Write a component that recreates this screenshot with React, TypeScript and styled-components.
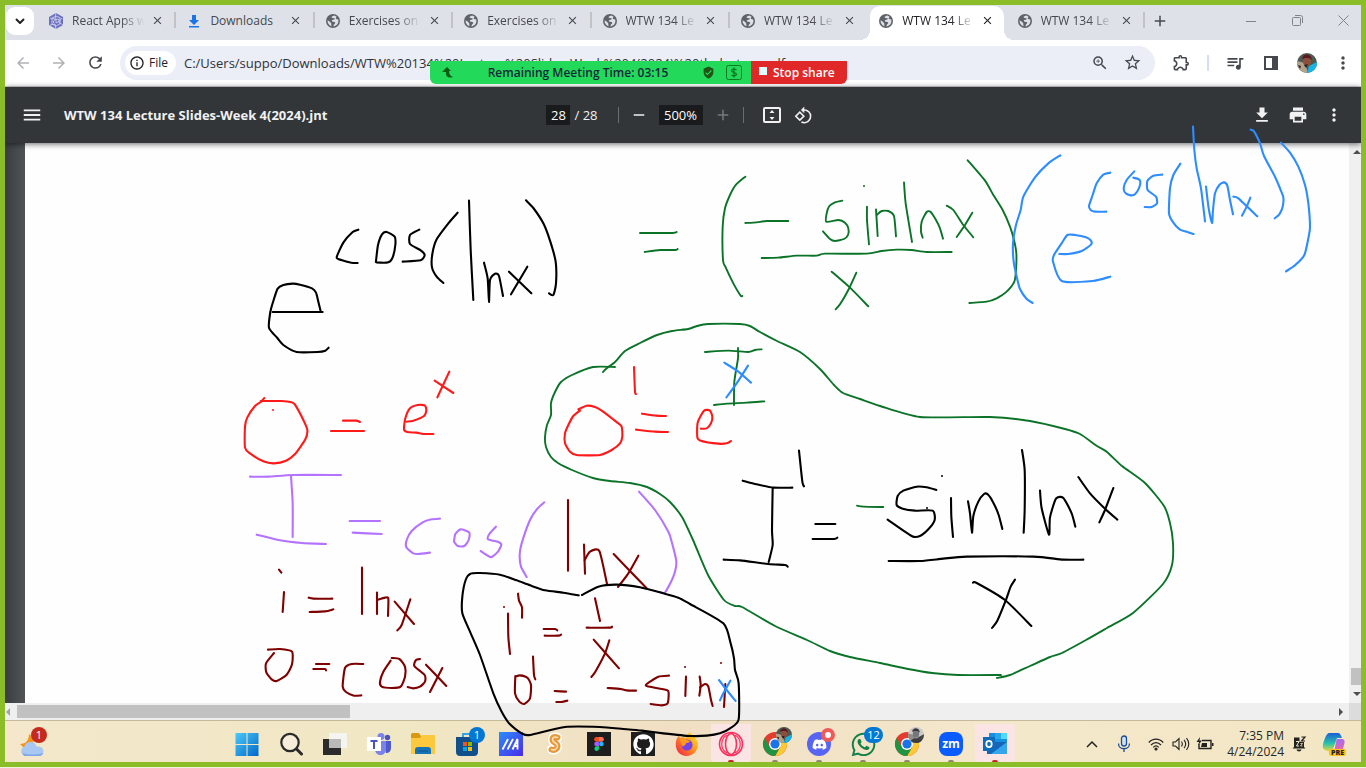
import React from 'react';
import styled, { createGlobalStyle, css } from 'styled-components';
import {
  MdArrowBack, MdArrowForward, MdRefresh, MdZoomIn, MdStarBorder, MdOutlineExtension, MdQueueMusic,
  MdMoreVert, MdMenu, MdRemove, MdAdd, MdFileDownload, MdPrint, MdRotate90DegreesCcw, MdClose,
  MdInfoOutline, MdVerifiedUser,
} from 'react-icons/md';
import { FaGithub, FaDiscord, FaWhatsapp } from 'react-icons/fa';

const Global = createGlobalStyle`
  * { box-sizing: border-box; }
  body { margin: 0; background: #eef5dc; overflow: hidden; }
  body, button, input { font-family: "Open Sans", "Noto Sans", sans-serif; font-size: 12px; }
  button { border: 0; padding: 0; background: none; color: inherit; cursor: pointer; }
  svg { display: block; flex: none; }
`;

const Screen = styled.div`
  position: relative;
  display: flex;
  flex-direction: column;
  height: calc(100vh - 1px);
  border: 5px solid #8bbd28;
  background: #fff;
  overflow: hidden;
`;

/* Tab strip */

const TabStrip = styled.header`
  display: flex;
  align-items: center;
  height: 35px;
  background: #dee1e8;
  color: #45484c;
`;

const TabSearch = styled.button`
  display: grid;
  place-items: center;
  flex: none;
  width: 28px;
  height: 28px;
  margin: 0 4px 4px 1px;
  border-radius: 9px;
  background: #fff;
  color: #202124;
`;

const Tabs = styled.nav`
  display: flex;
  flex: 0 1 1107px;
  min-width: 0;
  align-self: stretch;
`;

const Tab = styled.div<{ $active?: boolean; $bare?: boolean }>`
  position: relative;
  display: flex;
  align-items: center;
  flex: 1 1 0;
  min-width: 0;
  padding: 0 11px 4px 10px;
  &::after {
    content: "";
    position: absolute;
    right: 0;
    top: 7px;
    width: 2px;
    height: 16px;
    background: ${p => (p.$bare || p.$active ? 'transparent' : '#c3c3c6')};
  }
  ${p => p.$active && css`
    color: #202124;
    z-index: 1;
    &::before {
      content: "";
      position: absolute;
      inset: 1px 3px 0 2px;
      border-radius: 10px 10px 0 0;
      background: #fff;
    }
  `}
`;

const TabFlare = styled.i<{ $right?: boolean }>`
  position: absolute;
  bottom: 0;
  width: 10px;
  height: 10px;
  ${p => (p.$right
    ? 'right: -7px; background: radial-gradient(circle at 100% 0, transparent 10px, #fff 10px);'
    : 'left: -8px; background: radial-gradient(circle at 0 0, transparent 10px, #fff 10px);')}
`;

const TabLink = styled.a`
  position: relative;
  display: flex;
  align-items: center;
  gap: 8px;
  flex: 1;
  min-width: 0;
  color: inherit;
  text-decoration: none;
`;

const TabTitle = styled.span<{ $faded: boolean }>`
  flex: 1;
  white-space: nowrap;
  line-height: 16px;
  ${p => p.$faded && 'mask-image: linear-gradient(90deg, #000 66%, transparent 98%);'}
`;

const TabClose = styled.button`
  position: relative;
  display: grid;
  place-items: center;
  width: 16px;
  height: 16px;
  margin-left: 4px;
`;

const NewTab = styled.button`
  display: grid;
  place-items: center;
  flex: none;
  width: 30px;
  height: 30px;
  margin-bottom: 4px;
`;

const WindowButtons = styled.div`
  display: flex;
  flex: none;
  margin: 0 -5px 4px auto;
  color: #808388;
`;

const WindowButton = styled.button`
  display: grid;
  place-items: center;
  width: 46px;
  height: 28px;
`;

/* Address bar */

const AddressBar = styled.div`
  display: flex;
  align-items: center;
  height: 47px;
  padding: 0 0 1px 0;
  border-bottom: 1px solid #d4d4d6;
  color: #45484c;
`;

const ToolButton = styled.button<{ $dim?: boolean }>`
  display: grid;
  place-items: center;
  width: 36px;
  height: 34px;
  flex: none;
  color: ${p => (p.$dim ? '#b0b2b5' : '#45484c')};
`;

const SlimToolButton = styled(ToolButton)`
  width: 32px;
`;

const Omnibox = styled.div`
  display: flex;
  align-items: center;
  flex: 1;
  min-width: 0;
  height: 34px;
  margin: 0 8px 0 7px;
  padding: 0 7px 0 5px;
  border-radius: 17px;
  background: #ebeef7;
`;

const FileChip = styled.button`
  display: flex;
  align-items: center;
  gap: 4px;
  height: 24px;
  padding: 0 8px 0 4px;
  border-radius: 12px;
  background: #fff;
  color: #202124;
`;

const Url = styled.input`
  flex: 1;
  min-width: 0;
  margin-left: 8px;
  padding: 0;
  border: 0;
  background: none;
  color: #303236;
  font-size: 13px;
  line-height: 20px;
`;

const ToolDivider = styled.span`
  width: 2px;
  height: 16px;
  margin: 0 8px;
  background: #d0e0fb;
`;

/* PDF viewer */

const PdfBar = styled.div`
  position: relative;
  z-index: 1;
  display: grid;
  grid-template-columns: 1fr auto 1fr;
  align-items: center;
  height: 56px;
  padding: 0 9px;
  background: #323639;
  box-shadow: 0 1px 6px rgba(0, 0, 0, 0.6);
  color: #f1f1f1;
`;

const BarGroup = styled.div<{ $end?: boolean }>`
  display: flex;
  align-items: center;
  min-width: 0;
  justify-content: ${p => (p.$end ? 'flex-end' : 'flex-start')};
`;

const DocTitle = styled.h1`
  margin: 0 0 0 14px;
  font-size: 13px;
  font-weight: 700;
  line-height: 20px;
  white-space: nowrap;
`;

const BarField = styled.input<{ $wide?: boolean }>`
  width: ${p => (p.$wide ? 44 : 24)}px;
  height: 20px;
  padding: 0;
  border: 0;
  background: #191b1c;
  color: #fff;
  font-size: 13px;
  text-align: center;
`;

const PageCount = styled.span`
  margin: 0 20px 0 4px;
  font-size: 13px;
`;

const BarDivider = styled.span<{ $spaced?: boolean }>`
  width: 1px;
  height: 16px;
  margin-right: ${p => (p.$spaced ? 8 : 0)}px;
  background: #6b6e70;
`;

const BarButton = styled.button<{ $dim?: boolean }>`
  display: grid;
  place-items: center;
  width: 36px;
  height: 32px;
  color: ${p => (p.$dim ? '#77797b' : '#f1f1f1')};
`;

const WideBarButton = styled(BarButton)`
  width: 40px;
`;

const SlimBarButton = styled(BarButton)`
  width: 24px;
  margin-right: 4px;
`;

const Viewer = styled.main`
  display: grid;
  grid-template-columns: 20px 1fr 12px;
  grid-template-rows: 1fr 17px;
  flex: 1;
  min-height: 0;
`;

const Gutter = styled.div`
  background: linear-gradient(90deg, #3b3e41, #505457);
`;

const Page = styled.section`
  background: #fefefe;
`;

const VerticalTrack = styled.div`
  display: flex;
  flex-direction: column;
  align-items: flex-end;
  padding: 6px 0;
  background: #f0f0f0;
`;

const VerticalThumb = styled.div`
  width: 10px;
  height: 17px;
  margin: auto 0 6px;
  background: #c1c1c1;
`;

const HorizontalTrack = styled.div`
  grid-column: 1 / 3;
  display: flex;
  align-items: center;
  background: #efefef;
`;

const HorizontalThumb = styled.div`
  flex: 0 1 333px;
  height: 13px;
  margin: 0 auto 0 7px;
  background: #c1c1c1;
`;

const Corner = styled.div`
  background: #dcdcdc;
`;

/* Meeting share bar, which floats over the browser */

const ShareBar = styled.div`
  position: absolute;
  z-index: 3;
  top: 56px;
  left: 50%;
  display: flex;
  width: 417px;
  height: 23px;
  margin-left: -253px;
  border-radius: 0 0 6px 6px;
  overflow: hidden;
  font-weight: 600;
`;

const ShareStatus = styled.div`
  display: flex;
  align-items: center;
  flex: 1;
  padding: 0 9px 0 12px;
  gap: 11px;
  background: #23d959;
  color: #14283c;
`;

const ShareText = styled.span`
  flex: 1;
  text-align: center;
  white-space: nowrap;
`;

const StopShare = styled.button`
  display: flex;
  align-items: center;
  gap: 6px;
  width: 96px;
  padding-left: 8px;
  background: #e02828;
  color: #fff;
  font-weight: 600;
  white-space: nowrap;
`;

const StopSquare = styled.i`
  width: 8px;
  height: 8px;
  margin-bottom: 4px;
  background: #dff;
`;

/* Taskbar */

const Taskbar = styled.footer`
  display: flex;
  align-items: center;
  height: 42px;
  border-top: 1px solid #c4b998;
  background: linear-gradient(90deg, #f4e7cb, #f0e7c4 30%, #f1dfc4 50%, #f4e8cb 75%, #f3e6c4);
  color: #262626;
`;

const WeatherCell = styled.div`
  flex: 0 1 220px;
  min-width: 56px;
  padding-left: 14px;
`;

const AppCell = styled.button<{ $lit?: boolean }>`
  position: relative;
  display: grid;
  place-items: center;
  width: 40px;
  height: 41px;
  margin: 0 2px;
  padding-top: 5px;
  border-radius: 4px;
  background: ${p => (p.$lit ? 'linear-gradient(transparent 3px, #fbe4e4 3px)' : 'none')};
`;

const RunMark = styled.i<{ $hot?: boolean }>`
  position: absolute;
  bottom: 0;
  left: 17px;
  width: 6px;
  height: 2px;
  border-radius: 2px 2px 0 0;
  background: ${p => (p.$hot ? '#c42b1c' : '#8f8873')};
`;

const Badge = styled.span<{ $red?: boolean }>`
  position: absolute;
  top: ${p => (p.$red ? -6 : 6)}px;
  right: 2px;
  display: grid;
  place-items: center;
  min-width: 16px;
  height: 16px;
  padding: 0 2px;
  border-radius: 8px;
  background: ${p => (p.$red ? '#c42b1c' : '#0078d4')};
  color: #fff;
  font-size: 11px;
  line-height: 16px;
`;

const WideBadge = styled(Badge)`
  right: 0;
  min-width: 19px;
`;

const WeatherButton = styled.button`
  position: relative;
  display: block;
  width: 28px;
  height: 24px;
  margin-top: 6px;
  & > ${Badge} { right: 0; }
`;

const Tray = styled.div`
  display: flex;
  align-items: center;
  margin-left: auto;
  padding-top: 5px;
`;

const TrayButton = styled.button<{ $w: number }>`
  display: grid;
  place-items: center;
  width: ${p => p.$w}px;
  height: 32px;
`;

const Clock = styled.time`
  padding: 0 7px;
  text-align: right;
  line-height: 16px;
`;

const InkLayer = styled.svg`
  position: absolute;
  z-index: 4;
  top: -5px;
  left: -5px;
  pointer-events: none;
`;

/* Small drawings */

const Globe = () => (
  <svg width="16" height="16" viewBox="0 0 16 16">
    <circle cx="8" cy="8" r="7" fill="#5f6368" />
    <path d="M9.200 2.400 7 3.600c-.8.5-.4 1.300.5 1.400l1.800.2c.7.2.5 1-.1 1.200l-2.400.8.2 1.400 2.400.3c.8.1 1 .9.600 1.500l-1.200 1.400-.4 1.600c2.800-.3 5-2.500 5-5.400 0-.6-.1-1.100-.3-1.600L11.400 6c-.8-.2-.9-1-.3-1.600l.5-.7zM2.600 7.200l2.300 1.500 1.300 1.600.3 2.900C4.200 12.500 2.600 10.400 2.600 8z" fill="#dee1e8" />
  </svg>
);

const HexLogo = () => (
  <svg width="16" height="16" viewBox="0 0 16 16">
    <path d="M8 0l7 4v8l-7 4-7-4V4z" fill="#6c6fc0" />
    <path d="M8 3.200l4 1.500v6.300L8 13 4 11V5zM2 5l5 1.200L8 0M14 5l-3.500 4L15 12M8 16l-1-5-5 1M8 6v4l3-1.500V6.500L8 6l-2.500 2v2" fill="none" stroke="#d7d9f0" strokeWidth=".8" />
  </svg>
);

const DownloadMark = () => (
  <svg width="16" height="16" viewBox="0 0 16 16">
    <path d="M6 2h4v5h3l-5 5-5-5h3zM3 13h10v1.500H3z" fill="#1a73e8" />
  </svg>
);

const SidePanel = () => (
  <svg width="16" height="16" viewBox="0 0 16 16">
    <path d="M2 2h12v12H2z" fill="none" stroke="#45484c" strokeWidth="2" />
    <path d="M9 2h5v12H9z" fill="#45484c" />
  </svg>
);

const Avatar = ({ size = 20, grey = false }: { size?: number; grey?: boolean }) => (
  <svg width={size} height={size} viewBox="0 0 20 20">
    <clipPath id={grey ? 'face-grey' : 'face'}><circle cx="10" cy="10" r="10" /></clipPath>
    <g clipPath={`url(#${grey ? 'face-grey' : 'face'})`}>
      <path d="M0 0h20v20H0z" fill={grey ? '#c9c9c9' : '#4d5a50'} />
      <path d="M0 8l8 2 3 10H0z" fill={grey ? '#8c8c8c' : '#b3a38a'} />
      <path d="M10 20l2-7 8-4v11z" fill={grey ? '#444' : '#18b4e6'} />
      <ellipse cx="10" cy="8.500" rx="4" ry="5" fill={grey ? '#777' : '#8d4f3b'} />
      <path d="M5 6c1-6 9-6 10 1l-3-2-4 0z" fill={grey ? '#3a3a3a' : '#5c1720'} />
      {!grey && <path d="M7 12l4-1-2 4zM1 12l3 1-1 3z" fill="#222" />}
      {grey && <path d="M3 20c0-8 14-8 14 0z" fill="#3d3d3d" />}
    </g>
  </svg>
);

const FitPage = () => (
  <svg width="20" height="18" viewBox="0 0 20 18" fill="#f1f1f1">
    <rect x="2" y="2" width="16" height="14" rx="1" fill="none" stroke="#f1f1f1" strokeWidth="2" />
    <path d="M10 4l2.500 3h-5zM10 14l2.500-3h-5z" />
  </svg>
);

const Arrow = ({ d }: { d: string }) => (
  <svg width="8" height="6" viewBox="0 0 8 6" fill="#4f4f4f"><path d={d} /></svg>
);

const Pointer = ({ d, fill }: { d: string; fill: string }) => (
  <svg width="5" height="8" viewBox="0 0 5 8" fill={fill}><path d={d} /></svg>
);

const Weather = () => (
  <svg width="26" height="24" viewBox="0 0 26 24">
    <path d="M1 11c6 0 9-4 9-10 5 3 6 9 2 13H4z" fill="#f4941e" />
    <path d="M6 23a5 5 0 0 1-.5-9.500C6 10 9 8.500 12 9c3 0 5 2 5.500 4.500 4-.5 7 1.500 7 5 0 3-2 4.500-4.500 4.500z" fill="#a9c7f3" />
    <path d="M4 20c4 2 14 2 20 0-.5 2-2 3-4 3H6c-1 0-2-1-2-3z" fill="#7fa6e6" />
  </svg>
);

const Windows = () => (
  <svg width="24" height="24" viewBox="0 0 24 24">
    <linearGradient id="win" x2="1" y2="1"><stop stopColor="#4cc9f8" /><stop offset="1" stopColor="#0068c9" /></linearGradient>
    <path d="M.5 1H11.500v11H.5zM12.500 1H23.500v11H12.500zM.5 13H11.500v11H.5zM12.500 13H23.500v11H12.500z" fill="url(#win)" />
  </svg>
);

const SearchMark = () => (
  <svg width="24" height="24" viewBox="0 0 24 24" fill="none" stroke="#2a2a2a">
    <circle cx="11" cy="10.500" r="8.700" strokeWidth="2.200" fill="#f6eedb" />
    <path d="M17.500 17l5 5" strokeWidth="3" strokeLinecap="round" />
  </svg>
);

const TaskView = () => (
  <svg width="24" height="24" viewBox="0 0 24 24">
    <path d="M0 7h18v16H0z" fill="#2b2b2b" />
    <path d="M6 1h18v15H6z" fill="#f4f4f4" opacity=".93" />
    <path d="M6 7h12v9H6z" fill="#b9b9b9" />
  </svg>
);

const Teams = () => (
  <svg width="26" height="24" viewBox="0 0 26 24">
    <circle cx="21.500" cy="5.500" r="2.700" fill="#4b53bc" />
    <circle cx="15" cy="4.500" r="3.500" fill="#7b83eb" />
    <path d="M17 9h8v7c0 3-2 5-5 5z" fill="#5059c9" />
    <path d="M9 9h11v8c0 8-11 8-11 0z" fill="#7b83eb" />
    <path d="M1 5h14v14H1z" fill="#fff" />
    <path d="M4.500 8h7v2H9v7H7v-7H4.500z" fill="#4b53bc" />
  </svg>
);

const Explorer = () => (
  <svg width="24" height="24" viewBox="0 0 24 24">
    <path d="M0 3c0-1 .5-2 1.500-2H8l2 3h12l2 3v4H0z" fill="#d99a12" />
    <path d="M0 6h9l2-3h13v19H0z" fill="#fcc83d" />
    <path d="M4 22v-4c0-2 1-3 3-3h10c2 0 3 1 3 3v4z" fill="#1573b8" />
    <path d="M7 19h10" stroke="#0d5587" />
  </svg>
);

const Store = () => (
  <svg width="24" height="24" viewBox="0 0 24 24">
    <path d="M8 6V2h9v4" fill="none" stroke="#35a3e8" strokeWidth="2" />
    <path d="M1 5h22v15c0 2-1 4-4 4H5c-3 0-4-2-4-4z" fill="#12508c" />
    <path d="M8 10h4v4H8z" fill="#f35325" /><path d="M13 10h4v4h-4z" fill="#81bc06" />
    <path d="M8 15h4v4H8z" fill="#05a6f0" /><path d="M13 15h4v4h-4z" fill="#ffba08" />
  </svg>
);

const MyAsus = () => (
  <svg width="24" height="24" viewBox="0 0 24 24">
    <linearGradient id="asus" x2="1" y2="1"><stop stopColor="#2a8cff" /><stop offset="1" stopColor="#4b2be8" /></linearGradient>
    <path d="M0 0h24v24H0z" fill="url(#asus)" />
    <path d="M3.500 17.500L9 7M8.500 17.500L14 7M13.500 17.500L18.500 7v10.500M16 14h3" fill="none" stroke="#fff" strokeWidth="1.800" />
  </svg>
);

const Scribe = () => (
  <svg width="24" height="26" viewBox="0 0 24 26" fill="none" strokeLinecap="round" strokeLinejoin="round">
    <path d="M14.500 6.500c-2.500-1-5-.5-5 2 0 3.500 5 3 5 6.500s-3.500 4.500-6 3.500" stroke="#fff" strokeWidth="9" />
    <path d="M14.500 6.500c-2.500-1-5-.5-5 2 0 3.500 5 3 5 6.500s-3.500 4.500-6 3.500" stroke="#e79a3c" strokeWidth="6" />
    <path d="M14.500 6.500c-2.500-1-5-.5-5 2 0 3.500 5 3 5 6.500s-3.500 4.500-6 3.500" stroke="#fbe2b8" strokeWidth="1.500" />
  </svg>
);

const Figma = () => (
  <svg width="24" height="24" viewBox="0 0 24 24">
    <path d="M0 0h24v24H0z" fill="#1e1e1e" />
    <path d="M12 5H9.500a2.300 2.300 0 0 0 0 4.700H12z" fill="#f24e1e" />
    <path d="M12 5h2.500a2.300 2.300 0 0 1 0 4.700H12z" fill="#ff7262" />
    <path d="M12 9.700H9.500a2.300 2.300 0 0 0 0 4.600H12z" fill="#a259ff" />
    <circle cx="14.400" cy="12" r="2.300" fill="#1abcfe" />
    <path d="M12 14.300H9.500A2.300 2.300 0 1 0 12 16.600z" fill="#0acf83" />
  </svg>
);

const GithubTile = styled.span`
  display: grid;
  place-items: center;
  width: 24px;
  height: 24px;
  background: #1e1e1e;
  color: #fff;
`;

const Firefox = () => (
  <svg width="24" height="24" viewBox="0 0 24 24">
    <linearGradient id="fox" x1="1" x2="0" y2="1"><stop offset=".1" stopColor="#ffe226" /><stop offset=".5" stopColor="#ff8a1f" /><stop offset="1" stopColor="#f0164f" /></linearGradient>
    <path d="M15 0c1 3 7 5 8 12 0 7-5 12-11.500 12S.8 19 .8 12.500C.8 9 2 5 4 4l1 2c2-1 5-1 6 1 0-3 2-5 4-7z" fill="url(#fox)" />
    <circle cx="12" cy="13" r="5.500" fill="#7542e5" />
    <path d="M5 7c3-1 5 0 7 1l3 1c-1 2-3 2-4 2 0 3-3 2-3 4C6 12 5 9 5 7z" fill="#ff9a20" />
  </svg>
);

const Opera = () => (
  <svg width="26" height="26" viewBox="0 0 26 26" fill="none" stroke="#fa2f5c" strokeWidth="1.600">
    <circle cx="13" cy="13" r="11.500" />
    <ellipse cx="13" cy="13" rx="5.500" ry="10.500" />
    <path d="M9 4c-7 4-7 14 0 18M17 4c7 4 7 14 0 18" strokeWidth="1.200" />
  </svg>
);

const Chrome = ({ grey }: { grey?: boolean }) => (
  <svg width="24" height="24" viewBox="0 0 24 24" overflow="visible">
    <circle cx="12" cy="12" r="12" fill="#e33b2e" />
    <path d="M12 6h10.400A12 12 0 0 1 12 24l5.200-9z" fill="#fcc934" />
    <path d="M12 24A12 12 0 0 1 1.600 6l5.200 9 10.400 0z" fill="#229342" />
    <circle cx="12" cy="12" r="6" fill="#fff" />
    <circle cx="12" cy="12" r="4.600" fill="#1a73e8" />
    <g transform="translate(13 -5)"><Avatar size={16} grey={grey} /></g>
  </svg>
);

const DiscordTile = styled.span`
  display: grid;
  place-items: center;
  width: 24px;
  height: 24px;
  border-radius: 12px;
  background: #5865f2;
  color: #fff;
`;

const LiveDot = styled.i`
  position: absolute;
  top: 7px;
  right: 4px;
  width: 14px;
  height: 14px;
  border: 4px solid #ee5b5b;
  border-radius: 7px;
  background: #fff;
`;

const ZoomTile = styled.span`
  display: grid;
  place-items: center;
  width: 24px;
  height: 24px;
  border-radius: 8px;
  background: #0b5cff;
  color: #fff;
  font-size: 12px;
  font-weight: 700;
  line-height: 20px;
`;

const Outlook = () => (
  <svg width="24" height="22" viewBox="0 0 24 22">
    <path d="M6 0h18v9H6z" fill="#1490df" /><path d="M12 0h6v6h-6z" fill="#28a8ea" /><path d="M18 0h6v6h-6z" fill="#50d9ff" />
    <path d="M4 9h20v12H4z" fill="#1565b8" /><path d="M24 9v12H8z" fill="#35a6ee" />
    <path d="M0 4h12v14H0z" fill="#0f6cbd" />
    <ellipse cx="6" cy="11" rx="2.700" ry="3.200" fill="none" stroke="#fff" strokeWidth="1.800" />
  </svg>
);

const Mic = () => (
  <svg width="14" height="18" viewBox="0 0 14 18" fill="none" stroke="#1a4d94" strokeWidth="1.300">
    <rect x="4.500" y="1" width="5" height="10" rx="2.500" fill="#cfe0f2" />
    <path d="M1.500 8.500c0 7 11 7 11 0M7 14v3" />
  </svg>
);

const Wifi = () => (
  <svg width="16" height="14" viewBox="0 0 16 14" fill="none" stroke="#222" strokeWidth="1.200">
    <path d="M.8 5.500c4-4.600 10.400-4.600 14.400 0M3 8c3-3.200 7-3.200 10 0M5.200 10.300c1.800-1.800 3.800-1.800 5.600 0" />
    <circle cx="8" cy="12" r="1" fill="#222" />
  </svg>
);

const Volume = () => (
  <svg width="18" height="14" viewBox="0 0 18 14" fill="none" stroke="#222" strokeWidth="1.100">
    <path d="M1 5v4h2.500L7 12.500v-11L3.500 5zM9.500 4.500c1 1.500 1 3.500 0 5M12 2.800c2 2.500 2 6 0 8.400M14.500 1.200c2.800 3.500 2.800 8 0 11.600" />
  </svg>
);

const Battery = () => (
  <svg width="18" height="14" viewBox="0 0 18 14">
    <path d="M6 3.500h9v8H3V7" fill="none" stroke="#222" strokeWidth="1.400" />
    <path d="M16 6h1.500v3H16zM6 6h5v4H5z" fill="#222" />
    <path d="M4 0L.5 5H3L2 8.500 6 3.500H3.500z" fill="#222" />
  </svg>
);

const Bell = () => (
  <svg width="15" height="16" viewBox="0 0 15 16">
    <path d="M2 1.500h5.500V6H12v5l1.500 1.500H.5L2 11z" fill="#222" /><path d="M4.500 13.500h5c-.5 2.500-4.500 2.500-5 0z" fill="#222" />
    <path d="M4 5.500h3L4.500 10H7" fill="none" stroke="#f3e6c4" />
    <path d="M8.500 7.500h2L8.500 10h2" fill="none" stroke="#f3e6c4" strokeWidth=".8" />
    <path d="M9.500 1H13L9.500 5H13" fill="none" stroke="#222" strokeWidth="1.200" />
  </svg>
);

const Copilot = styled.span`
  position: relative;
  display: block;
  width: 24px;
  height: 24px;
`;

const Pre = styled.span`
  position: absolute;
  right: 0;
  bottom: 0;
  width: 17px;
  border-radius: 2px;
  background: #ffc21a;
  color: #222;
  font-size: 7px;
  font-weight: 800;
  line-height: 7px;
  text-align: center;
`;

/* Handwritten ink. Each sheet holds strokes in fractions of a pixel from its own origin. */

type Stroke = [color: string, points: string[]];
type Sheet = { x: number; y: number; unit: number; strokes: Stroke[] };

const BLACK = '#000';
const GREEN = '#0b7328';
const BLUE = '#2d8cff';
const RED = '#ff1a1a';
const PURPLE = '#b473ff';
const MAROON = '#7f0000';

const sheets: Sheet[] = [
  { x: 230, y: 180, unit: 3, strokes: [
    [BLACK, [
      '128,396 278,396',
      '272,394 265,365 258,338 246,325 210,314 188,311 160,315 143,326 130,363 121,396 117,443 142,474 160,495 200,516 262,516 286,512 296,503',
      '385,149 368,156 340,188 320,232 334,240 364,248 383,249',
      '438,243 444,195 456,163 470,156 494,170 496,195 488,232 475,247 440,247 438,243',
      '568,149 540,165 540,192 572,211 584,225 572,241 518,245',
      '683,98 655,130 620,178 607,222 606,262 620,290 640,309',
      '717,62 722,210 730,360',
      '762,248 773,295 777,366 780,300 795,281 807,288 819,348',
      '837,275 904,340', '892,260 843,343',
      '888,61 910,84 940,130 960,182 977,245 978,310 970,345 957,340',
    ]],
    [RED, [
      '103,654 92,666 75,678 52,712 45,740 45,803 60,820 100,844 132,850 168,842 195,822 226,778 232,750 220,720 195,674 185,667 155,663 92,663',
      '339,722 378,722 390,726', '303,753 402,753',
      '530,725 550,722 582,708 589,690 584,676 563,675 540,685 526,715 522,748 532,756 560,758 580,762 610,762',
      '614,602 670,639', '658,575 622,652',
    ]],
  ] },
  { x: 230, y: 460, unit: 3, strokes: [
    [PURPLE, [
      '60,50 115,50 190,45 333,45', '183,48 188,130 188,231', '80,224 150,241 215,249 288,252',
      '359,183 450,183', '368,218 455,222',
      '630,176 605,178 578,187 545,213 530,240 529,262 550,280 565,282 600,278',
      '672,245 676,222 692,208 718,218 716,240 703,258 683,258 672,245',
      '798,200 778,222 774,238 805,246 814,254 804,275 785,291 775,288 752,273',
    ]],
    [MAROON, [
      '147,329 154,338', '162,396 158,456', '236,413 250,416 307,416', '239,456 285,454 310,448',
      '396,323 396,462', '441,398 441,462', '442,420 465,413 475,416 474,468',
      '494,425 552,492', '541,418 515,495 502,511',
      '114,569 150,567 186,575 186,613 170,644 140,663 125,658 109,637 108,610 132,579',
      '258,612 298,612', '250,627 285,627 288,631',
      '400,612 365,612 345,624 338,680 348,696 372,707 394,706',
      '485,594 508,597 525,620 525,650 512,680 485,684 455,680 450,665 460,635 482,602',
      '570,597 558,600 553,618 584,645 585,665 570,680 550,685 533,681',
      '588,614 649,678', '637,624 600,696',
    ]],
  ] },
  { x: 450, y: 480, unit: 3, strokes: [
    [PURPLE, [
      '283,67 262,86 240,120 215,190 209,225 213,260 230,291',
      '567,35 615,90 655,155 665,185 679,245 670,290 645,338 632,336',
    ]],
    [MAROON, [
      '354,60 354,272', '402,194 405,281', '404,240 420,215 448,213 471,312',
      '491,222 590,325', '565,227 535,280 504,321',
      '174,401 175,470 180,522', '204,341 207,362 216,382 216,413',
      '281,447 315,447 322,451', '284,467 325,467 333,464', '435,355 450,423', '410,443 480,443 486,440',
      '431,479 507,565', '478,481 465,520 436,575 424,591',
      '196,588 195,640 208,665 223,672 240,655 243,615 232,593 210,586 196,590', '249,530 252,585 256,598',
      '314,633 348,635', '319,666 335,666 352,662', '473,624 512,627 530,631 558,632',
      '657,587 625,590 590,612 592,619 650,630 656,640 653,670 635,676 602,672',
      '708,590 706,648', '749,590 752,615 748,647',
      '750,622 765,612 775,620 783,660 788,678', '826,612 822,681',
    ]],
    [BLUE, ['807,600 830,630 857,663', '841,602 820,640 810,661']],
    [BLACK, [
      '396,345 445,320 500,314 570,322 640,340 685,353 720,372 820,430 842,490 852,535 855,570 866,610 866,718 840,745 810,760 770,767 720,768 640,760 575,752 520,747 450,741 345,741 240,765 215,760 180,733 155,695 130,640 90,525 60,455 37,400 37,350 47,300 62,281 90,279 150,284 200,301 240,316 285,331 340,338 386,346',
    ]],
  ] },
  { x: 530, y: 320, unit: 3, strokes: [
    [RED, [
      '312,141 315,215 318,222',
      '150,272 130,288 115,315 105,340 105,370 120,395 140,405 210,405 245,390 270,370 277,350 275,320 262,308 215,272 195,261 170,257 145,268',
      '336,281 378,287 408,288', '318,329 375,335 414,336',
      '513,326 530,325 543,310 547,290 540,272 522,272 503,308 502,352 512,362 565,371 590,370 603,363',
    ]],
    [GREEN, ['525,96 595,92 655,96 675,90 695,88', '624,84 624,115 613,185 612,255', '552,255 590,251 650,248 703,244']],
    [BLUE, ['583,128 625,155 663,188', '654,137 620,190 589,232']],
  ] },
  { x: 620, y: 120, unit: 3, strokes: [
    [GREEN, [
      '60,339 158,339 170,336', '74,396 120,390 165,390 173,387',
      '376,170 348,194 330,225 315,265 308,320 309,420 316,440 340,490 362,527 367,528',
      '376,309 410,307 440,303 505,303',
      '667,242 645,247 628,258 620,280 619,305 655,300 675,308 685,325 684,345 672,357 645,363 630,357 609,334',
      '741,260 741,300 747,373', '768,268 773,348', '770,285 785,273 805,273 822,288 828,349',
      '852,187 857,250 876,366', '908,353 903,335 905,305 920,276 932,276 948,300 960,325 969,356',
      '980,257 1000,270 1030,315 1060,352', '1057,278 1035,315 1010,351',
      '425,414 475,413 530,407 590,407 615,401 740,401 785,393 830,389 875,390 920,396 995,396',
      '635,455 690,503 745,559', '709,458 685,510 660,553 647,568',
      '1043,121 1095,182 1120,225 1148,270 1170,320 1182,360 1189,400 1188,450 1183,485 1160,515 1130,535 1100,545 1048,549',
    ]],
  ] },
  { x: 980, y: 120, unit: 3, strokes: [
    [BLUE, [
      '241,106 205,130 165,172 130,230 122,270 108,315 99,370 101,425 110,470 120,507 140,537 158,549',
      '238,402 265,402 305,393 333,374 333,362 318,352 285,345 262,345 245,370 222,405 219,425 245,483 338,483 391,470',
      '391,158 370,164 350,190 338,225 327,258 332,270 345,275 379,275',
      '463,154 440,180 431,205 437,220 452,226 465,223 478,202 481,185 475,177 460,173',
      '547,164 520,167 502,183 503,210 528,230 531,250 515,261 494,261',
      '601,131 580,165 570,205 567,280 580,308 600,329 620,335 641,342',
      '639,20 643,90 650,145 663,205 675,304',
      '678,200 686,265 696,309 699,270 705,220 718,195 732,187 742,197 750,240 759,283',
      '760,230 775,235 832,289', '811,233 800,260 786,287',
      '812,29 822,34 840,70 852,108 885,170 900,205 910,232 908,260 898,283 884,295',
      '903,68 930,98 955,140 975,195 985,250 990,320 985,355 973,405 945,436 918,454',
    ]],
  ] },
  { x: 710, y: 430, unit: 3, strokes: [
    [BLACK, [
      '98,152 140,163 190,173 247,173', '267,62 277,155 282,169', '188,174 186,300 188,345 176,396',
      '41,389 90,391 175,402 225,405 233,410', '316,282 376,282', '308,327 372,327 382,323',
      '679,180 650,172 620,170 580,182 563,198 560,225 578,236 615,242 668,242 674,270 655,298 628,319 605,318 533,269',
      '723,204 724,260 729,321',
      '774,214 780,250 786,308 790,258 805,215 822,192 833,193 850,218 866,255 877,297',
      '936,60 944,120 944,240 941,308',
      '990,182 995,235 1017,314 1020,262 1038,206 1060,204 1085,250 1096,290',
      '1105,141 1140,190 1185,236 1222,269', '1210,174 1185,240 1168,277',
      '536,393 630,393 700,386 770,380 970,380 1060,389 1120,389',
      '789,458 800,459 885,510 964,588', '915,449 902,470 887,512 862,572 846,594',
    ]],
    [GREEN, ['441,227 460,230 520,231']],
  ] },
  { x: 0, y: 0, unit: 1, strokes: [
    [GREEN, [
      '615,367 593,367 572,375 561,382 555,392 551,403 551,415 547,425 545,437 546,447 551,457 558,463 572,470 593,478 610,481 630,483 647,487 660,494 670,502 682,517 693,540 708,575 724,600 735,606 742,607 775,626 807,640 830,651 850,657 880,663 908,669 932,673 958,675 1001,675',
      '997,678 1010,675 1030,666 1050,657 1062,653 1086,640 1107,628 1133,613 1163,584 1172,565 1173,543 1170,523 1164,506 1145,483 1122,466 1107,452 1097,446 1080,434 1065,429 1030,421 990,417 920,417 880,406 860,399 843,393 834,385 820,369 800,352 777,341 760,332 750,326 740,324 708,324 697,326 688,329 672,331 657,335 640,343 625,351 615,362 607,368 603,372',
    ]],
  ] },
];

/* Single taps of the pen */
const dots: [number, number, string][] = [
  [273, 410, RED], [504, 607, MAROON], [685, 667, MAROON], [721, 663, MAROON],
  [864, 186, GREEN], [942, 476, BLACK], [927, 508, BLACK],
];

/* Joins the sampled pen positions with a soft curve through every one of them. */
function strokePath(points: string) {
  const p = points.split(' ').map(s => s.split(',').map(Number));
  let d = `M${p[0]}`;
  for (let i = 0; i < p.length - 1; i++) {
    const a = p[i - 1] ?? p[i];
    const b = p[i];
    const c = p[i + 1];
    const e = p[i + 2] ?? c;
    const k = 1 / 9;
    d += `C${b[0] + (c[0] - a[0]) * k},${b[1] + (c[1] - a[1]) * k} ${c[0] - (e[0] - b[0]) * k},${c[1] - (e[1] - b[1]) * k} ${c}`;
  }
  return d;
}

const Ink = () => (
  <InkLayer width="1366" height="768" viewBox="0 0 1366 768" fill="none" strokeLinecap="round" strokeLinejoin="round">
    {sheets.map((s, i) => (
      <g key={i} transform={`translate(${s.x} ${s.y}) scale(${1 / s.unit})`}>
        {s.strokes.map(([color, lines]) => (
          <g key={color} stroke={color} strokeWidth={(color === GREEN ? 1.9 : 2.1) * s.unit}>
            {lines.map(l => <path key={l} d={strokePath(l)} />)}
          </g>
        ))}
      </g>
    ))}
    {dots.map(([x, y, color]) => <circle key={`${x} ${y}`} cx={x} cy={y} r="1" fill={color} />)}
  </InkLayer>
);

const tabs = [
  { title: 'React Apps w', icon: <HexLogo /> },
  { title: 'Downloads', icon: <DownloadMark />, whole: true },
  { title: 'Exercises on', icon: <Globe /> },
  { title: 'Exercises on', icon: <Globe /> },
  { title: 'WTW 134 Le', icon: <Globe /> },
  { title: 'WTW 134 Le', icon: <Globe />, bare: true },
  { title: 'WTW 134 Le', icon: <Globe />, active: true },
  { title: 'WTW 134 Le', icon: <Globe /> },
];

const apps: { name: string; icon: React.ReactNode; lit?: boolean; mark?: 'idle' | 'hot'; extra?: React.ReactNode }[] = [
  { name: 'Start', icon: <Windows /> },
  { name: 'Search', icon: <SearchMark /> },
  { name: 'Task view', icon: <TaskView /> },
  { name: 'Teams', icon: <Teams /> },
  { name: 'File Explorer', icon: <Explorer /> },
  { name: 'Store', icon: <Store />, extra: <Badge>1</Badge> },
  { name: 'MyASUS', icon: <MyAsus /> },
  { name: 'Scribe', icon: <Scribe /> },
  { name: 'Figma', icon: <Figma /> },
  { name: 'GitHub', icon: <GithubTile><FaGithub size={21} /></GithubTile> },
  { name: 'Firefox', icon: <Firefox /> },
  { name: 'Opera', icon: <Opera />, lit: true, mark: 'hot' },
  { name: 'Chrome', icon: <Chrome />, mark: 'idle' },
  { name: 'Discord', icon: <DiscordTile><FaDiscord size={15} /></DiscordTile>, mark: 'idle', extra: <LiveDot /> },
  { name: 'WhatsApp', icon: <FaWhatsapp size={27} color="#128048" />, mark: 'idle', extra: <WideBadge>12</WideBadge> },
  { name: 'Chrome, second profile', icon: <Chrome grey />, mark: 'idle' },
  { name: 'Zoom', icon: <ZoomTile>zm</ZoomTile>, mark: 'idle' },
  { name: 'Outlook', icon: <Outlook />, lit: true, mark: 'hot' },
];

export default function App() {
  return (
    <Screen>
      <Global />
      <TabStrip>
        <TabSearch aria-label="Search tabs">
          <svg width="10" height="6" fill="none" stroke="currentColor" strokeWidth="2"><path d="M1 1l4 4 4-4" /></svg>
        </TabSearch>
        <Tabs aria-label="Tabs">
          {tabs.map((t, i) => (
            <Tab key={i} $active={t.active} $bare={t.bare}>
              {t.active && <><TabFlare /><TabFlare $right /></>}
              <TabLink href="#">{t.icon}<TabTitle $faded={!t.whole}>{t.title}</TabTitle></TabLink>
              <TabClose aria-label={`Close ${t.title}`}><MdClose size={13} /></TabClose>
            </Tab>
          ))}
        </Tabs>
        <NewTab aria-label="New tab"><MdAdd size={18} /></NewTab>
        <WindowButtons>
          <WindowButton aria-label="Minimise"><svg width="10" height="10" stroke="currentColor"><path d="M0 5.500h10" /></svg></WindowButton>
          <WindowButton aria-label="Restore">
            <svg width="11" height="11" fill="none" stroke="currentColor"><rect x=".5" y="2.500" width="8" height="8" rx="1" /><path d="M3 .5h5.500q2 0 2 2V8" /></svg>
          </WindowButton>
          <WindowButton aria-label="Close window"><svg width="11" height="11" stroke="currentColor"><path d="M.5.5l10 10M10.500.5l-10 10" /></svg></WindowButton>
        </WindowButtons>
      </TabStrip>

      <AddressBar>
        <ToolButton $dim aria-label="Back"><MdArrowBack size={18} /></ToolButton>
        <ToolButton $dim aria-label="Forward"><MdArrowForward size={18} /></ToolButton>
        <ToolButton aria-label="Reload"><MdRefresh size={19} /></ToolButton>
        <Omnibox>
          <FileChip><MdInfoOutline size={16} />File</FileChip>
          <Url aria-label="Address" defaultValue="C:/Users/suppo/Downloads/WTW%20134%20Lecture%20Slides-Week%204(2024)%20thelecture.pdf" />
          <SlimToolButton aria-label="Zoom"><MdZoomIn size={18} /></SlimToolButton>
          <SlimToolButton aria-label="Bookmark"><MdStarBorder size={19} /></SlimToolButton>
        </Omnibox>
        <ToolButton aria-label="Extensions"><MdOutlineExtension size={19} /></ToolButton>
        <ToolDivider />
        <ToolButton aria-label="Media"><MdQueueMusic size={20} /></ToolButton>
        <ToolButton aria-label="Side panel"><SidePanel /></ToolButton>
        <ToolButton aria-label="Profile"><Avatar /></ToolButton>
        <ToolButton aria-label="Menu"><MdMoreVert size={20} /></ToolButton>
      </AddressBar>

      <PdfBar>
        <BarGroup>
          <BarButton aria-label="Outline"><MdMenu size={22} /></BarButton>
          <DocTitle>WTW 134 Lecture Slides-Week 4(2024).jnt</DocTitle>
        </BarGroup>
        <BarGroup>
          <BarField aria-label="Page" defaultValue="28" />
          <PageCount>/ 28</PageCount>
          <BarDivider />
          <WideBarButton aria-label="Zoom out"><MdRemove size={18} /></WideBarButton>
          <BarField $wide aria-label="Zoom level" defaultValue="500%" />
          <WideBarButton $dim aria-label="Zoom in"><MdAdd size={18} /></WideBarButton>
          <BarDivider $spaced />
          <WideBarButton aria-label="Fit to page"><FitPage /></WideBarButton>
          <SlimBarButton aria-label="Rotate"><MdRotate90DegreesCcw size={19} /></SlimBarButton>
        </BarGroup>
        <BarGroup $end>
          <BarButton aria-label="Download"><MdFileDownload size={20} /></BarButton>
          <BarButton aria-label="Print"><MdPrint size={20} /></BarButton>
          <BarButton aria-label="More"><MdMoreVert size={20} /></BarButton>
        </BarGroup>
      </PdfBar>

      <Viewer>
        <Gutter />
        <Page aria-label="Slide 28" />
        <VerticalTrack>
          <Arrow d="M4 1l4 4H0z" />
          <VerticalThumb />
          <Arrow d="M4 5l4-4H0z" />
        </VerticalTrack>
        <HorizontalTrack>
          <Pointer d="M5 0v8L1 4z" fill="#a3a3a3" />
          <HorizontalThumb />
          <Pointer d="M1 0v8l4-4z" fill="#4f4f4f" />
          <svg width="6" height="8" />
        </HorizontalTrack>
        <Corner />
      </Viewer>

      <Taskbar>
        <WeatherCell><WeatherButton aria-label="Weather"><Weather /><Badge $red>1</Badge></WeatherButton></WeatherCell>
        {apps.map(a => (
          <AppCell key={a.name} aria-label={a.name} $lit={a.lit}>
            {a.icon}
            {a.extra}
            {a.mark && <RunMark $hot={a.mark === 'hot'} />}
          </AppCell>
        ))}
        <Tray>
          <TrayButton $w={32} aria-label="Hidden icons">
            <svg width="12" height="8" fill="none" stroke="#222" strokeWidth="1.500"><path d="M1 7l5-5 5 5" /></svg>
          </TrayButton>
          <TrayButton $w={32} aria-label="Microphone"><Mic /></TrayButton>
          <TrayButton $w={32} aria-label="Network"><Wifi /></TrayButton>
          <TrayButton $w={18} aria-label="Volume"><Volume /></TrayButton>
          <TrayButton $w={30} aria-label="Battery"><Battery /></TrayButton>
          <Clock>7:35 PM<br />4/24/2024</Clock>
          <TrayButton $w={16} aria-label="Notifications"><Bell /></TrayButton>
          <TrayButton $w={54} aria-label="Copilot">
            <Copilot>
              <svg width="24" height="24" viewBox="0 0 24 24">
                <linearGradient id="cp" x2="0" y2="1"><stop stopColor="#1a5fd8" /><stop offset=".6" stopColor="#2cc6a8" /><stop offset="1" stopColor="#f2d338" /></linearGradient>
                <linearGradient id="cq" x2="0" y2="1"><stop stopColor="#a46bf5" /><stop offset="1" stopColor="#f4689c" /></linearGradient>
                <path d="M7 1h9c2 0 3 2 4 5h-5l-4 11c-1 3-8 3-10-1-1-3 3-15 6-15z" fill="url(#cp)" />
                <path d="M15 7h5c3 0 3 3 2 6l-2 7h-9c2 0 3-13 4-13z" fill="url(#cq)" />
              </svg>
              <Pre>PRE</Pre>
            </Copilot>
          </TrayButton>
        </Tray>
      </Taskbar>

      <ShareBar>
        <ShareStatus>
          <svg width="12" height="12" viewBox="0 0 12 12" fill="#0a5c12"><path d="M5 0l4 4H7c0 3 1 5 4 6-4 1.500-7 0-7-3V5H0z" /></svg>
          <ShareText>Remaining Meeting Time: 03:15</ShareText>
          <MdVerifiedUser size={13} color="#1f5416" />
          <svg width="16" height="15" viewBox="0 0 16 15" fill="none" stroke="#0e7a24">
            <rect x=".5" y=".5" width="15" height="14" rx="2" />
            <path d="M10.500 5C9 3.500 5.500 4 5.500 5.800S10.500 7.500 10.500 9.300 7 11.500 5.500 10M8 2.500v10" strokeWidth="1.300" />
          </svg>
        </ShareStatus>
        <StopShare><StopSquare />Stop share</StopShare>
      </ShareBar>

      <Ink />
    </Screen>
  );
}
